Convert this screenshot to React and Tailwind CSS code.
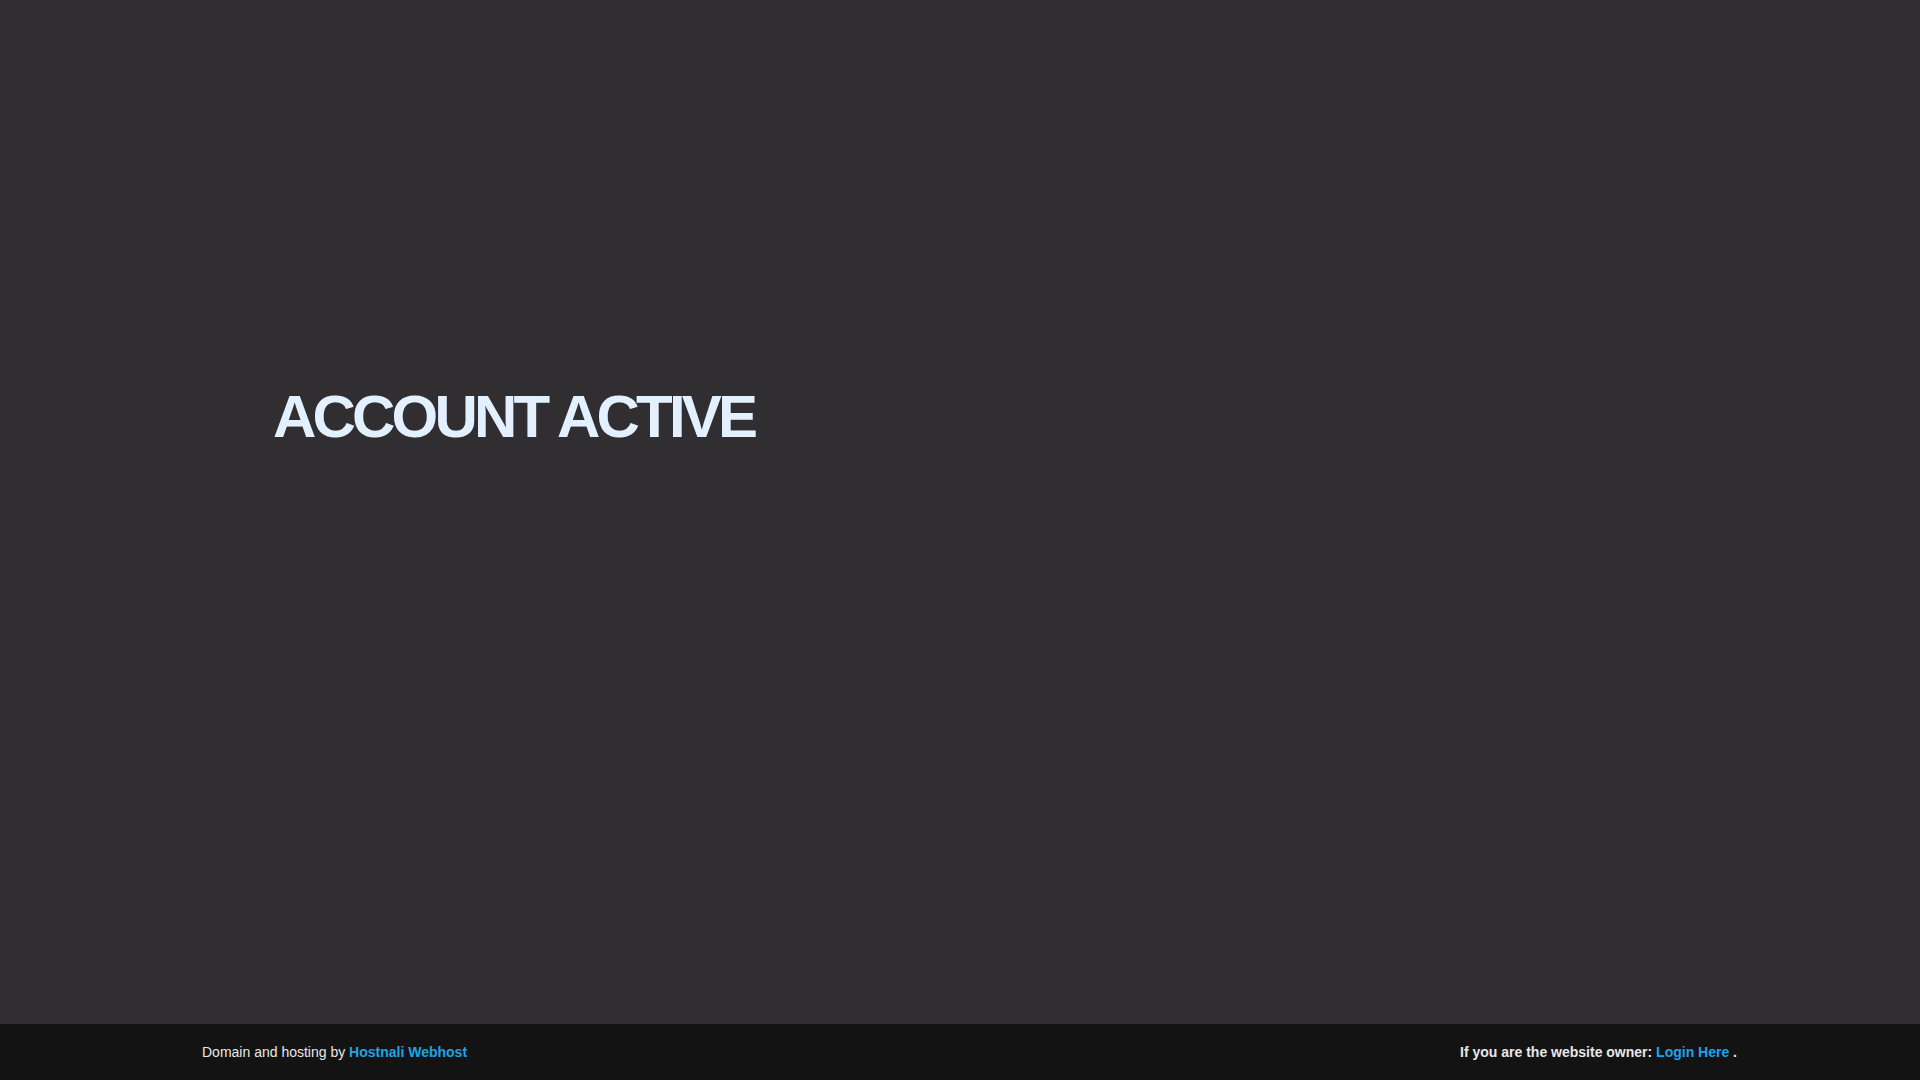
const App = () => {
  return (
    <div className="flex flex-col h-screen bg-[#302e31] font-['Liberation_Sans',Arial,sans-serif]">
      <div className="flex flex-grow items-center">
        <div className="w-full px-[273px] pb-[190px]">
          <h1 className="text-[60px] leading-none font-bold tracking-[-3.8px] text-[#e3f0ff]">
            ACCOUNT ACTIVE
          </h1>
        </div>
      </div>
      <footer className="flex items-center justify-between h-[56px] bg-[#131313] pl-[202px] pr-[183px] text-[14px] text-[#e8e8e8]">
        <div>
          Domain and hosting by{" "}
          <a className="font-bold text-[#1fa3e8] cursor-pointer">Hostnali Webhost</a>
        </div>
        <div className="font-bold">
          If you are the website owner:{" "}
          <a className="text-[#1fa3e8] cursor-pointer">Login Here</a> .
        </div>
      </footer>
    </div>
  );
};

export default App;
